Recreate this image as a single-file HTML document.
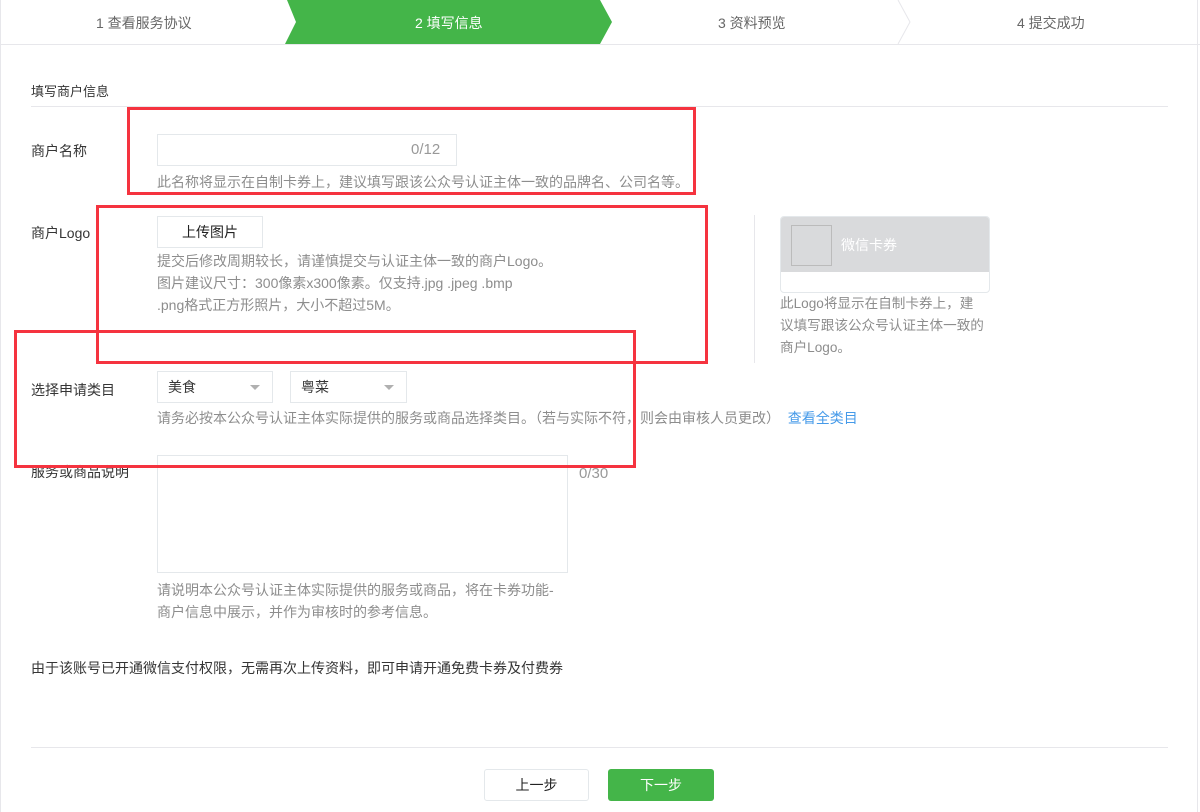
<!DOCTYPE html><html><head><meta charset="utf-8"><style>
*{margin:0;padding:0;box-sizing:border-box}
body{width:1200px;height:812px;background:#fff;position:relative;overflow:hidden;font-family:"Liberation Sans","Noto Sans CJK SC",sans-serif;font-size:14px;color:#353535}
.a{position:absolute;white-space:nowrap}
.tip{color:#8d8d8d;font-size:14px;line-height:22px}
.lbl{font-size:14px;color:#353535}
.box{position:absolute;border:1px solid #e4e8eb;background:#fff}
.red{position:absolute;border:3px solid #f5333f}
.sel{position:absolute;border:1px solid #e4e8eb;height:32px;padding-left:10px;line-height:30px;font-size:14px}
.sel:after{content:"";position:absolute;right:12px;top:13px;border:5px solid transparent;border-top:5px solid #b0b0b0}
</style></head><body>
<div class="a" style="left:0;top:0;width:1200px;height:45px;border-bottom:1px solid #e7e7eb"></div>
<div class="a" style="left:0;top:0;width:1px;height:812px;background:#e7e7eb"></div>
<div class="a" style="left:1197px;top:0;width:1px;height:812px;background:#e7e7eb"></div>
<svg class="a" style="left:0;top:0" width="1200" height="45"><polygon points="287,0 600,0 612,22 600,44 285,44 296,22" fill="#44b549"/><polyline points="898,0 910,22 898,44" fill="none" stroke="#e7e7eb"/></svg>
<div class="a" style="left:96px;top:13px;font-size:14px;color:#666">1 查看服务协议</div>
<div class="a" style="left:415px;top:13px;font-size:14px;color:#fff">2 填写信息</div>
<div class="a" style="left:718px;top:13px;font-size:14px;color:#666">3 资料预览</div>
<div class="a" style="left:1017px;top:13px;font-size:14px;color:#666">4 提交成功</div>
<div class="a" style="left:31px;top:81px;font-size:13px">填写商户信息</div>
<div class="a" style="left:31px;top:106px;width:1137px;height:1px;background:#e7e7eb"></div>

<div class="a lbl" style="left:31px;top:141px">商户名称</div>
<div class="box" style="left:157px;top:134px;width:300px;height:32px"></div>
<div class="a" style="left:411px;top:141px;color:#999;font-size:15px">0/12</div>
<div class="a tip" style="left:157px;top:171px">此名称将显示在自制卡券上，建议填写跟该公众号认证主体一致的品牌名、公司名等。</div>

<div class="a lbl" style="left:31px;top:223px">商户Logo</div>
<div class="box" style="left:157px;top:216px;width:106px;height:32px;text-align:center;line-height:30px;font-size:14px;color:#222">上传图片</div>
<div class="a tip" style="left:157px;top:250px">提交后修改周期较长，请谨慎提交与认证主体一致的商户Logo。<br>图片建议尺寸：300像素x300像素。仅支持.jpg .jpeg .bmp<br>.png格式正方形照片，大小不超过5M。</div>
<div class="a" style="left:754px;top:215px;width:1px;height:148px;background:#e7e7eb"></div>
<div class="a" style="left:780px;top:216px;width:210px;height:77px;border:1px solid #e4e8eb;border-radius:4px;overflow:hidden"><div style="height:55px;background:#d9dadc;position:relative"><div class="a" style="left:10px;top:8px;width:41px;height:41px;border:1px solid #bbb"></div><div class="a" style="left:60px;top:18px;color:#fff;font-size:14px">微信卡券</div></div></div>
<div class="a tip" style="left:780px;top:293px;font-size:13.6px">此Logo将显示在自制卡券上，建<br>议填写跟该公众号认证主体一致的<br>商户Logo。</div>

<div class="a lbl" style="left:31px;top:380px">选择申请类目</div>
<div class="sel" style="left:157px;top:371px;width:116px">美食</div>
<div class="sel" style="left:290px;top:371px;width:117px">粤菜</div>
<div class="a tip" style="left:157px;top:407px">请务必按本公众号认证主体实际提供的服务或商品选择类目。（若与实际不符，则会由审核人员更改）&nbsp; <span style="color:#459ae9">查看全类目</span></div>

<div class="a lbl" style="left:31px;top:462px">服务或商品说明</div>
<div class="box" style="left:157px;top:455px;width:411px;height:118px"></div>
<div class="a" style="left:579px;top:465px;color:#999;font-size:15px">0/30</div>
<div class="a tip" style="left:157px;top:579px">请说明本公众号认证主体实际提供的服务或商品，将在卡券功能-<br>商户信息中展示，并作为审核时的参考信息。</div>

<div class="a lbl" style="left:31px;top:658px">由于该账号已开通微信支付权限，无需再次上传资料，即可申请开通免费卡券及付费券</div>
<div class="a" style="left:31px;top:747px;width:1137px;height:1px;background:#e7e7eb"></div>
<div class="box" style="left:484px;top:769px;width:105px;height:32px;border-radius:3px;text-align:center;line-height:30px;color:#222">上一步</div>
<div class="a" style="left:608px;top:769px;width:106px;height:32px;border-radius:3px;background:#44b549;color:#fff;text-align:center;line-height:32px">下一步</div>

<div class="red" style="left:127px;top:107px;width:569px;height:88px"></div>
<div class="red" style="left:96px;top:205px;width:612px;height:159px"></div>
<div class="red" style="left:14px;top:330px;width:622px;height:138px"></div>
</body></html>
